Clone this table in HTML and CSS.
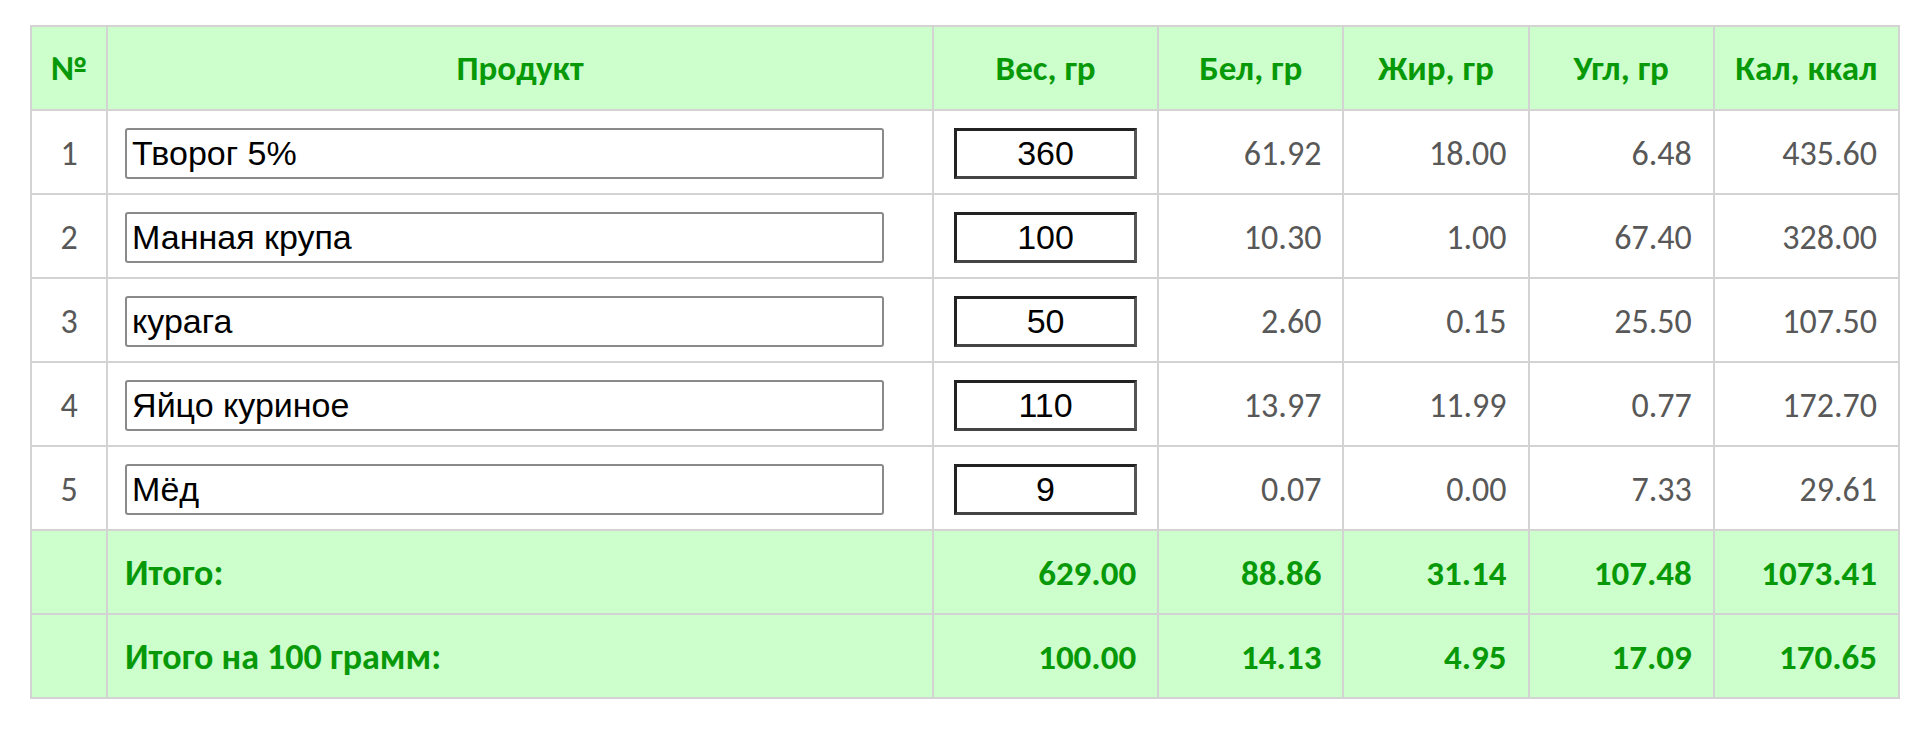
FILE: index.html
```html
<!DOCTYPE html>
<html lang="ru">
  <head>
    <meta charset="utf-8" />
    <title>Калькулятор калорий</title>
    <link rel="stylesheet" href="styles.css">
  </head>
  <body>
    <div class="wrapper">
      <table class="calc">
        <colgroup>
          <col class="c-num">
          <col class="c-name">
          <col class="c-weight">
          <col class="c-val">
          <col class="c-val">
          <col class="c-val">
          <col class="c-val">
        </colgroup>
        <thead>
          <tr>
            <th>№</th>
            <th>Продукт</th>
            <th>Вес, гр</th>
            <th>Бел, гр</th>
            <th>Жир, гр</th>
            <th>Угл, гр</th>
            <th>Кал, ккал</th>
          </tr>
        </thead>
        <tbody>
          <tr>
            <td class="num">1</td>
            <td><input class="name" type="text" value="Творог 5%"></td>
            <td class="weight"><input class="qty" type="text" value="360"></td>
            <td>61.92</td>
            <td>18.00</td>
            <td>6.48</td>
            <td>435.60</td>
          </tr>
          <tr>
            <td class="num">2</td>
            <td><input class="name" type="text" value="Манная крупа"></td>
            <td class="weight"><input class="qty" type="text" value="100"></td>
            <td>10.30</td>
            <td>1.00</td>
            <td>67.40</td>
            <td>328.00</td>
          </tr>
          <tr>
            <td class="num">3</td>
            <td><input class="name" type="text" value="курага"></td>
            <td class="weight"><input class="qty" type="text" value="50"></td>
            <td>2.60</td>
            <td>0.15</td>
            <td>25.50</td>
            <td>107.50</td>
          </tr>
          <tr>
            <td class="num">4</td>
            <td><input class="name" type="text" value="Яйцо куриное"></td>
            <td class="weight"><input class="qty" type="text" value="110"></td>
            <td>13.97</td>
            <td>11.99</td>
            <td>0.77</td>
            <td>172.70</td>
          </tr>
          <tr>
            <td class="num">5</td>
            <td><input class="name" type="text" value="Мёд"></td>
            <td class="weight"><input class="qty" type="text" value="9"></td>
            <td>0.07</td>
            <td>0.00</td>
            <td>7.33</td>
            <td>29.61</td>
          </tr>
        </tbody>
        <tfoot>
          <tr>
            <td></td>
            <td class="label">Итого:</td>
            <td>629.00</td>
            <td>88.86</td>
            <td>31.14</td>
            <td>107.48</td>
            <td>1073.41</td>
          </tr>
          <tr>
            <td></td>
            <td class="label">Итого на 100 грамм:</td>
            <td>100.00</td>
            <td>14.13</td>
            <td>4.95</td>
            <td>17.09</td>
            <td>170.65</td>
          </tr>
        </tfoot>
      </table>
    </div>
  </body>
</html>
```

FILE: styles.css
```css
html {
  --green: #089908;
  --green-bg: #ccffcc;
  --line: #d3d3d3;
}
body {
  margin: 0;
  background: #fff;
  font-family: Carlito, Lato, "Noto Sans", sans-serif;
}
.wrapper {
  padding: 25px 0 0 30px;
}
.calc {
  border-collapse: collapse;
  table-layout: fixed;
  width: 1870px;
  border: 2px solid var(--line);
}
.c-num { width: 76px; }
.c-name { width: 825px; }
.c-weight { width: 225px; }
.c-val { width: 185px; }

.calc th,
.calc td {
  border: 2px solid var(--line);
  height: 80px;
  padding: 2px 21px 0 17px;
  font-size: 34px;
  text-align: right;
  color: #585858;
}
.calc th {
  background: var(--green-bg);
  color: var(--green);
  font-weight: bold;
  font-size: 35px;
  text-align: center;
  padding: 0 10px;
  height: 82px;
}
.calc td.num {
  text-align: center;
  padding: 2px 0 0;
}
.calc td.weight {
  text-align: center;
  padding: 2px 0 0;
}
.calc tfoot td {
  background: var(--green-bg);
  color: var(--green);
  font-weight: bold;
  font-size: 35px;
}
.calc tfoot td.label {
  text-align: left;
  font-size: 36px;
}

.name {
  display: block;
  box-sizing: border-box;
  width: 759px;
  height: 51px;
  margin: 0;
  padding: 0 5px;
  border: 2px solid #8a8a8a;
  border-radius: 3px;
  font-family: "Liberation Sans", Arial, sans-serif;
  font-size: 34px;
  color: #000;
  background: #fff;
}
.qty {
  box-sizing: border-box;
  width: 183px;
  height: 51px;
  margin: 0;
  padding: 0;
  border: 3px solid #222;
  border-right-color: #555;
  border-bottom-color: #444;
  font-family: "Liberation Sans", Arial, sans-serif;
  font-size: 34px;
  text-align: center;
  color: #000;
  background: #fff;
}
```
